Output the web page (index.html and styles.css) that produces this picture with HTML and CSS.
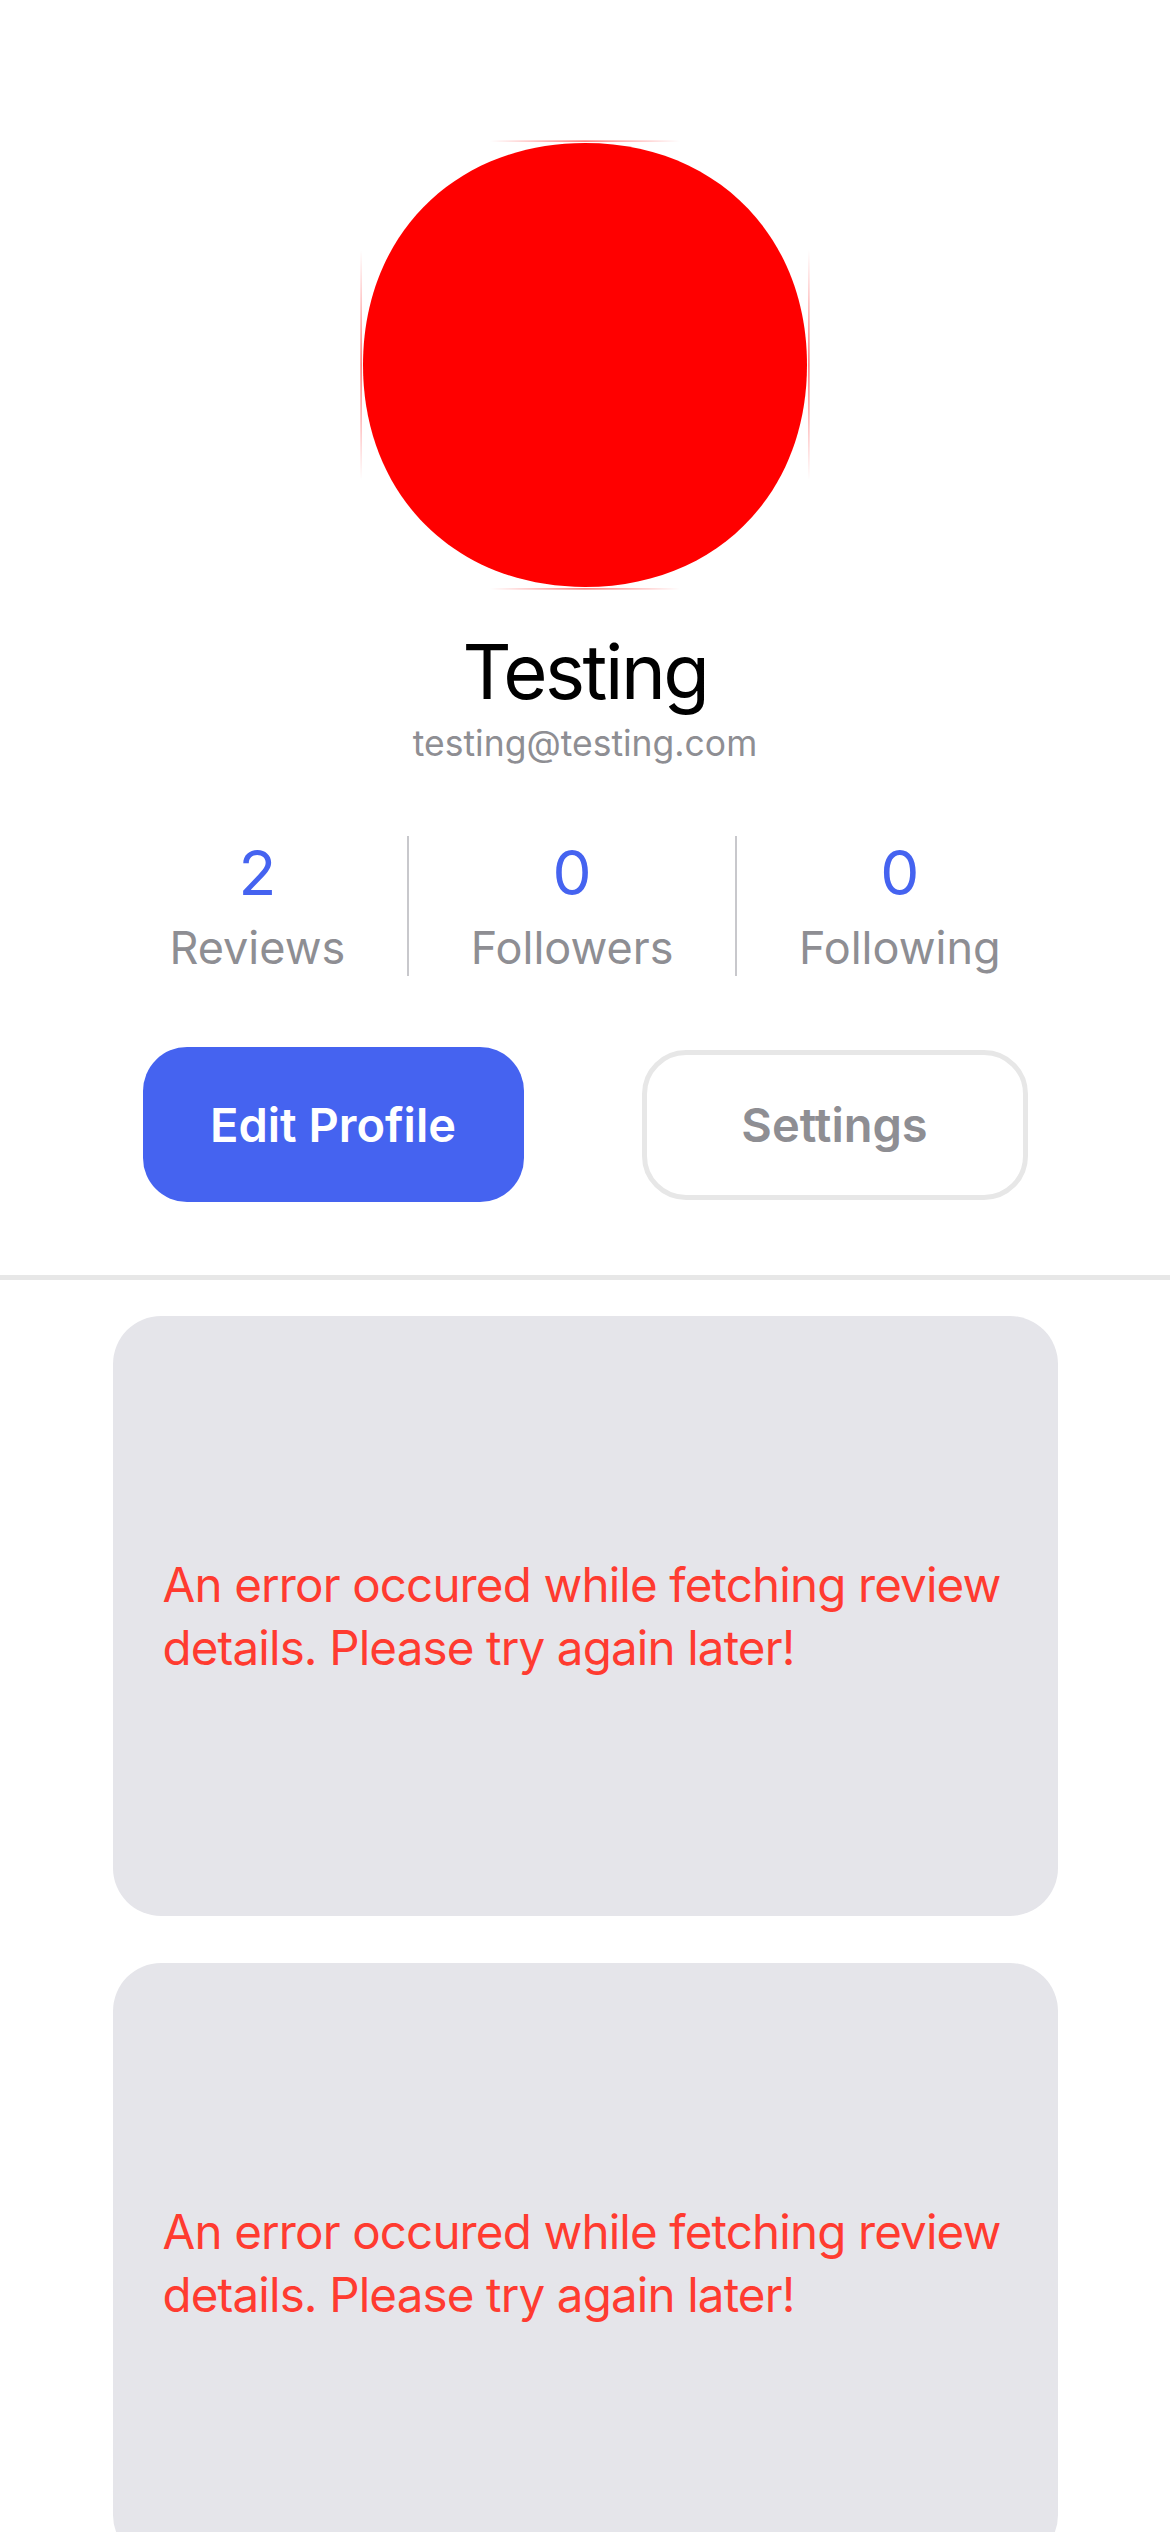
FILE: index.html
```html
<!DOCTYPE html>
<html lang="en">
<head>
<meta charset="utf-8">
<title>Profile</title>
<link rel="stylesheet" href="styles.css">
</head>
<body>
<main class="page">
  <section class="profile">
    <svg class="avatar" width="450" height="450" viewBox="0 0 450 450" xmlns="http://www.w3.org/2000/svg">
      <defs>
        <linearGradient id="gh" x1="0" y1="0" x2="1" y2="0">
          <stop offset="0" stop-color="#ff0000" stop-opacity="0"/>
          <stop offset="0.5" stop-color="#ff0000" stop-opacity="0.7"/>
          <stop offset="1" stop-color="#ff0000" stop-opacity="0"/>
        </linearGradient>
        <linearGradient id="gv" x1="0" y1="0" x2="0" y2="1">
          <stop offset="0" stop-color="#ff0000" stop-opacity="0"/>
          <stop offset="0.5" stop-color="#ff0000" stop-opacity="0.7"/>
          <stop offset="1" stop-color="#ff0000" stop-opacity="0"/>
        </linearGradient>
      </defs>
      <rect x="130" y="0.5" width="190" height="1.2" fill="url(#gh)"/>
      <rect x="130" y="448.3" width="190" height="1.2" fill="url(#gh)"/>
      <rect x="0.5" y="110" width="1.2" height="230" fill="url(#gv)"/>
      <rect x="448.3" y="110" width="1.2" height="230" fill="url(#gv)"/>
      <path d="M225,3 C355,3 447,95 447,225 C447,355 355,447 225,447 C95,447 3,355 3,225 C3,95 95,3 225,3 Z" fill="#ff0000"/>
    </svg>
    <h1 class="name">Testing</h1>
    <p class="email">testing@testing.com</p>

    <div class="stats">
      <div class="stat">
        <span class="stat-num">2</span>
        <span class="stat-label">Reviews</span>
      </div>
      <div class="stat-divider"></div>
      <div class="stat">
        <span class="stat-num">0</span>
        <span class="stat-label">Followers</span>
      </div>
      <div class="stat-divider"></div>
      <div class="stat">
        <span class="stat-num">0</span>
        <span class="stat-label">Following</span>
      </div>
    </div>

    <div class="actions">
      <button class="btn btn-primary">Edit Profile</button>
      <button class="btn btn-outline">Settings</button>
    </div>
  </section>

  <hr class="rule">

  <section class="reviews">
    <div class="review-card">
      <p class="error">An error occured while fetching review details. Please try again later!</p>
    </div>
    <div class="review-card">
      <p class="error">An error occured while fetching review details. Please try again later!</p>
    </div>
  </section>
</main>
</body>
</html>
```

FILE: styles.css
```css
* {
  box-sizing: border-box;
}

html, body {
  margin: 0;
  padding: 0;
  background: #ffffff;
}

body {
  width: 1170px;
  height: 2532px;
  overflow: hidden;
  font-family: "Inter", "Noto Sans", "Liberation Sans", sans-serif;
  color: #000000;
}

.page {
  display: flex;
  flex-direction: column;
}

.profile {
  display: flex;
  flex-direction: column;
  align-items: center;
  padding-top: 140px;
}

.avatar {
  display: block;
  width: 450px;
  height: 450px;
}

.name {
  margin: 43px 0 0;
  font-size: 76px;
  line-height: 76px;
  font-weight: 400;
  letter-spacing: -2.5px;
  color: #000000;
}

.email {
  margin: 17px 0 0;
  font-size: 35.5px;
  line-height: 35px;
  color: #8e8e93;
}

.stats {
  margin-top: 75px;
  display: flex;
  justify-content: center;
  align-items: stretch;
  height: 140px;
}

.stat {
  display: flex;
  flex-direction: column;
  align-items: center;
  padding: 6px 62px 0;
}

.stat-num {
  font-size: 62px;
  line-height: 62px;
  color: #4563f0;
}

.stat-label {
  margin-top: 21px;
  font-size: 45px;
  line-height: 45px;
  color: #8e8e93;
}

.stat-divider {
  width: 1.5px;
  background: #c8c8cc;
}

.actions {
  margin-top: 71px;
  display: flex;
  justify-content: center;
  align-items: center;
  gap: 118px;
}

.btn {
  font-family: "Inter", "Noto Sans", "Liberation Sans", sans-serif;
  font-size: 47px;
  font-weight: 600;
  border: none;
  padding: 0;
  margin: 0;
  display: flex;
  align-items: center;
  justify-content: center;
}

.btn-primary {
  width: 381px;
  height: 155px;
  border-radius: 44px;
  background: #4563f0;
  color: #ffffff;
}

.btn-outline {
  width: 386px;
  height: 150px;
  border-radius: 44px;
  background: #ffffff;
  border: 5px solid #e7e7e7;
  color: #8e8e93;
}

.rule {
  margin: 73px 0 0;
  border: none;
  height: 5px;
  background: #e7e7e7;
}

.reviews {
  margin-top: 36px;
  display: flex;
  flex-direction: column;
  align-items: center;
  gap: 47px;
}

.review-card {
  width: 945px;
  height: 600px;
  flex: none;
  border-radius: 48px;
  background: #e5e5ea;
  display: flex;
  align-items: center;
  padding: 0 40px 0 50px;
}

.error {
  margin: 0;
  font-size: 47.5px;
  line-height: 63px;
  letter-spacing: -0.85px;
  color: #ff3b30;
}
```
